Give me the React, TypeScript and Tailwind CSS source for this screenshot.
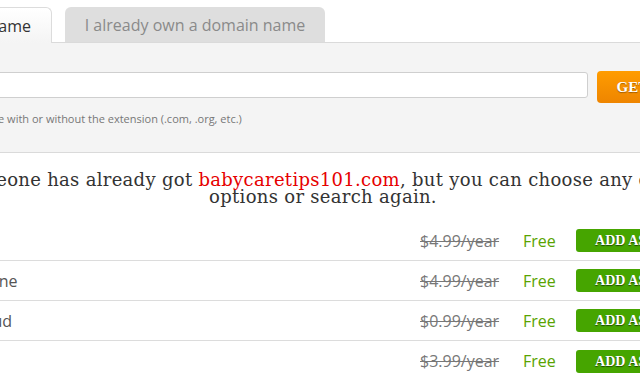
import React from 'react';

const rows = [
    { name: '.xyz', price: '$4.99/year' },
    { name: '.online', price: '$4.99/year' },
    { name: '.cloud', price: '$0.99/year' },
    { name: '.top', price: '$3.99/year' },
];

const App: React.FC = () => {
    return (
        <div className="w-[640px] h-[376px] overflow-hidden bg-white font-['Open_Sans',sans-serif]">
            <div className="w-[1062px] -ml-[208px]">
                {/* tabs */}
                <div className="flex gap-[13px] pt-[7px]">
                    <div className="w-[260px] h-[36px] -mb-px pr-[20px] rounded-t-[6px] border border-b-0 border-[#dcdcdc] bg-gradient-to-b from-white to-[#f4f4f4] flex items-center justify-end text-[16px] text-[#333]">
                        I want a new domain name
                    </div>
                    <div className="w-[260px] h-[35px] rounded-t-[6px] bg-[#dedede] flex items-center justify-center text-[16px] text-[#8a8a8a]">
                        I already own a domain name
                    </div>
                </div>

                {/* search panel */}
                <div className="bg-[#f4f4f4] border-t border-b border-[#dadada] h-[111px]">
                    <div className="pl-[91px] pr-[167px] pt-[28px]">
                        <div className="flex items-start gap-[9px]">
                            <input
                                type="text"
                                className="flex-1 h-[26px] mt-px bg-white border border-[#cfcfcf] rounded-[3px] px-2 text-sm outline-none"
                            />
                            <button className="w-[90px] h-[32px] rounded-[4px] bg-gradient-to-b from-[#ff9c00] to-[#ee8500] text-white font-bold text-[15px] font-['Liberation_Serif',serif] [text-shadow:0_1px_1px_rgba(0,0,0,0.35)]">
                                GET IT
                            </button>
                        </div>
                        <p className="mt-[8px] text-[11px] text-[#777]">
                            Enter the domain name with or without the extension (.com, .org, etc.)
                        </p>
                    </div>
                </div>

                {/* results */}
                <p className="pt-[18px] pb-[16px] text-center text-[18px] tracking-[0.3px] leading-[17px] text-[#333] font-['DejaVu_Serif',serif]">
                    Sorry, someone has already got <span className="text-[#e60000]">babycaretips101.com</span>, but you can choose any of the other
                    <br />
                    options or search again.
                </p>
                <div className="ml-[167px] w-[747px]">
                    {rows.map((r, i) => (
                        <div key={i} className="h-[40px] flex items-center border-b border-[#dcdcdc] last:border-b-0">
                            <div className="flex-1 pl-[8px] text-[16px] text-[#555]">{r.name}</div>
                            <div className="w-[103px] text-[16px] text-[#777] line-through">{r.price}</div>
                            <div className="w-[53px] text-[16px] text-[#59a300]">Free</div>
                            <button className="w-[130px] h-[23px] rounded-[3px] bg-[#46a500] text-white font-bold text-[14px] font-['Liberation_Serif',serif] [text-shadow:0_1px_1px_rgba(0,0,0,0.55)]">
                                ADD AS FREE
                            </button>
                        </div>
                    ))}
                </div>
            </div>
        </div>
    );
};

export default App;
